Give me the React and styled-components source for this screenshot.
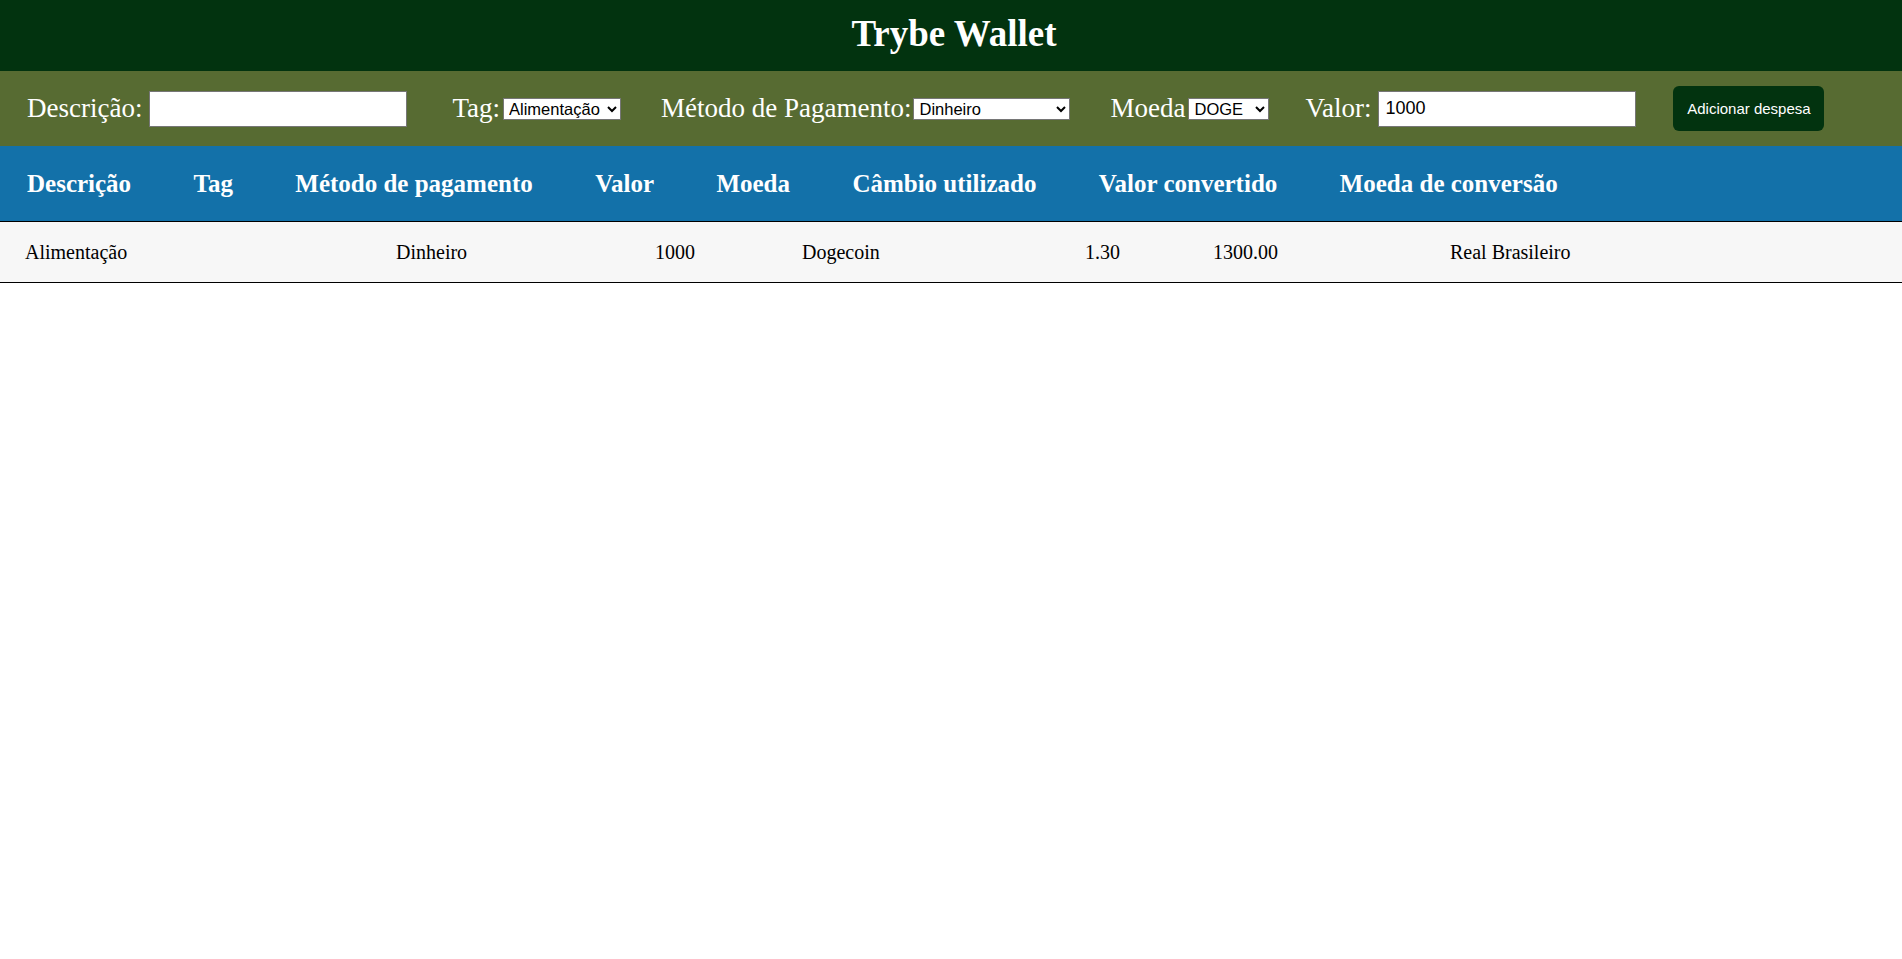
import React, { useState } from "react";
import styled, { createGlobalStyle } from "styled-components";

const GlobalStyle = createGlobalStyle`
  body {
    margin: 0;
    font-family: "Liberation Serif", "Times New Roman", serif;
    background: #ffffff;
  }
`;

const Header = styled.header`
  height: 71px;
  box-sizing: border-box;
  padding: 0 0 5px 6px;
  background-color: #02330f;
  display: flex;
  align-items: center;
  justify-content: center;
`;

const Title = styled.h1`
  margin: 0;
  font-size: 37px;
  font-weight: 700;
  color: #ffffff;
`;

const Form = styled.form`
  height: 75px;
  background-color: #576b32;
  display: flex;
  align-items: center;
  gap: 40px;
  padding-left: 27px;
`;

const Label = styled.label`
  display: flex;
  align-items: center;
  gap: ${(props) => props.gap || 3}px;
  margin-left: ${(props) => props.push || 0}px;
  font-size: 27px;
  color: #ffffff;
`;

const TextInput = styled.input`
  box-sizing: border-box;
  width: 258px;
  height: 36px;
  padding: 0 6px;
  border: 1px solid #767676;
  font-family: "Liberation Sans", Arial, sans-serif;
  font-size: 18px;
  color: #000;
  background: #fff;
`;

const Select = styled.select`
  box-sizing: border-box;
  width: ${(props) => props.width}px;
  height: 22px;
  padding: 0 0 0 1px;
  font-family: "Liberation Sans", Arial, sans-serif;
  font-size: 16.5px;
  color: #000;
  background: #fff;
  border: 1px solid #767676;
  border-radius: 0;
`;

const AddButton = styled.button`
  box-sizing: border-box;
  width: 151px;
  height: 45px;
  padding: 0;
  margin-left: -3px;
  border: none;
  border-radius: 6px;
  background-color: #02330f;
  color: #ffffff;
  font-family: "Liberation Sans", Arial, sans-serif;
  font-size: 15px;
`;

const TableHead = styled.div`
  height: 75px;
  background-color: #1371a9;
  border-bottom: 1px solid #000;
  display: flex;
  align-items: center;
  gap: 62.4px;
  padding-left: 27px;
`;

const HeadCell = styled.span`
  font-size: 25px;
  font-weight: 700;
  color: #ffffff;
`;

const TableRow = styled.div`
  height: 60px;
  background-color: #f7f7f7;
  border-bottom: 1px solid #000;
  display: grid;
  grid-template-columns: 371px 259px 147px 283px 128px 237px 1fr;
  align-items: center;
  padding-left: 25px;
`;

const Cell = styled.span`
  font-size: 20px;
  color: #000;
`;

const tags = ["Alimentação", "Lazer", "Trabalho", "Transporte", "Saúde"];
const methods = ["Dinheiro", "Cartão de crédito", "Cartão de débito"];
const currencies = [
  "USD", "CAD", "EUR", "GBP", "ARS", "BTC", "LTC", "JPY",
  "CHF", "AUD", "CNY", "ILS", "ETH", "XRP", "DOGE",
];

const columns = [
  "Descrição",
  "Tag",
  "Método de pagamento",
  "Valor",
  "Moeda",
  "Câmbio utilizado",
  "Valor convertido",
  "Moeda de conversão",
];

const expenses = [
  {
    id: 0,
    tag: "Alimentação",
    method: "Dinheiro",
    value: "1000",
    currency: "Dogecoin",
    rate: "1.30",
    converted: "1300.00",
    to: "Real Brasileiro",
  },
];

function App() {
  const [description, setDescription] = useState("");
  const [tag, setTag] = useState("Alimentação");
  const [method, setMethod] = useState("Dinheiro");
  const [currency, setCurrency] = useState("DOGE");
  const [value, setValue] = useState("1000");

  return (
    <>
      <GlobalStyle />
      <Header>
        <Title>Trybe Wallet</Title>
      </Header>
      <Form onSubmit={(e) => e.preventDefault()}>
        <Label gap={7}>
          Descrição:
          <TextInput
            value={description}
            onChange={(e) => setDescription(e.target.value)}
          />
        </Label>
        <Label push={5}>
          Tag:
          <Select width={118} value={tag} onChange={(e) => setTag(e.target.value)}>
            {tags.map((t) => (
              <option key={t}>{t}</option>
            ))}
          </Select>
        </Label>
        <Label gap={2}>
          Método de Pagamento:
          <Select
            width={157}
            value={method}
            onChange={(e) => setMethod(e.target.value)}
          >
            {methods.map((m) => (
              <option key={m}>{m}</option>
            ))}
          </Select>
        </Label>
        <Label>
          Moeda
          <Select
            width={81}
            value={currency}
            onChange={(e) => setCurrency(e.target.value)}
          >
            {currencies.map((c) => (
              <option key={c}>{c}</option>
            ))}
          </Select>
        </Label>
        <Label gap={7} push={-4}>
          Valor:
          <TextInput value={value} onChange={(e) => setValue(e.target.value)} />
        </Label>
        <AddButton type="submit">Adicionar despesa</AddButton>
      </Form>
      <TableHead>
        {columns.map((c) => (
          <HeadCell key={c}>{c}</HeadCell>
        ))}
      </TableHead>
      {expenses.map((ex) => (
        <TableRow key={ex.id}>
          <Cell>{ex.tag}</Cell>
          <Cell>{ex.method}</Cell>
          <Cell>{ex.value}</Cell>
          <Cell>{ex.currency}</Cell>
          <Cell>{ex.rate}</Cell>
          <Cell>{ex.converted}</Cell>
          <Cell>{ex.to}</Cell>
        </TableRow>
      ))}
    </>
  );
}

export default App;
